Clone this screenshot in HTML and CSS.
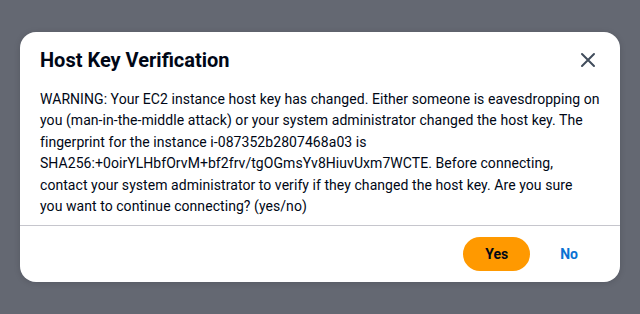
FILE: index.html
```html
<!DOCTYPE html>
<html lang="en">
<head>
<meta charset="utf-8">
<title>Host Key Verification</title>
<link rel="stylesheet" href="styles.css">
</head>
<body>
<div class="overlay">
  <div class="modal" role="dialog" aria-labelledby="modal-title">
    <div class="modal-header">
      <h2 id="modal-title" class="modal-title">Host Key Verification</h2>
      <button class="close-btn" aria-label="Close">
        <svg width="16" height="16" viewBox="0 0 16 16" aria-hidden="true">
          <path d="M2 2 L14 14 M14 2 L2 14" stroke="currentColor" stroke-width="2" stroke-linecap="round" fill="none"/>
        </svg>
      </button>
    </div>
    <div class="modal-body">
      <p class="message">WARNING: Your EC2 instance host key has changed. Either someone is eavesdropping on<br>
you (man-in-the-middle attack) or your system administrator changed the host key. The<br>
fingerprint for the instance i-087352b2807468a03 is<br>
SHA256:+0oirYLHbfOrvM+bf2frv/tgOGmsYv8HiuvUxm7WCTE. Before connecting,<br>
contact your system administrator to verify if they changed the host key. Are you sure<br>
you want to continue connecting? (yes/no)</p>
    </div>
    <div class="modal-footer">
      <button class="btn btn-primary">Yes</button>
      <button class="btn btn-link">No</button>
    </div>
  </div>
</div>
</body>
</html>
```

FILE: styles.css
```css
* { box-sizing: border-box; }

html, body {
  margin: 0;
  height: 100%;
}

body {
  background: #646872;
  font-family: Roboto, "Open Sans", sans-serif;
  color: #000716;
}

.overlay {
  padding: 32px 20px;
}

.modal {
  background: #ffffff;
  border-radius: 16px;
  box-shadow: 0 1px 6px rgba(0, 7, 22, 0.15);
  width: 600px;
  height: 250px;
  display: flex;
  flex-direction: column;
}

.modal-header {
  display: flex;
  align-items: center;
  justify-content: space-between;
  padding: 16px 24px 0 20px;
}

.modal-title {
  margin: 0;
  font-size: 20px;
  line-height: 24px;
  font-weight: 700;
  color: #000716;
}

.close-btn {
  border: 0;
  background: none;
  padding: 0;
  width: 16px;
  height: 16px;
  color: #414d5c;
  display: flex;
  cursor: pointer;
}

.modal-body {
  padding: 17px 20px 0 20px;
  flex: 1;
  border-bottom: 1px solid #c6c6cd;
}

.message {
  margin: 0;
  font-size: 14px;
  line-height: 21.4px;
  letter-spacing: 0.06px;
  white-space: nowrap;
}

.modal-footer {
  display: flex;
  justify-content: flex-end;
  align-items: center;
  gap: 8px;
  height: 56px;
  padding: 0 20px;
}

.btn {
  font-family: inherit;
  font-size: 14px;
  font-weight: 700;
  line-height: 22px;
  padding: 4px 20px;
  border: 2px solid transparent;
  border-radius: 20px;
  background: none;
  cursor: pointer;
}

.btn-primary {
  background: #ff9900;
  border-color: #ff9900;
  color: #000716;
}

.btn-link {
  color: #0972d3;
}
```
